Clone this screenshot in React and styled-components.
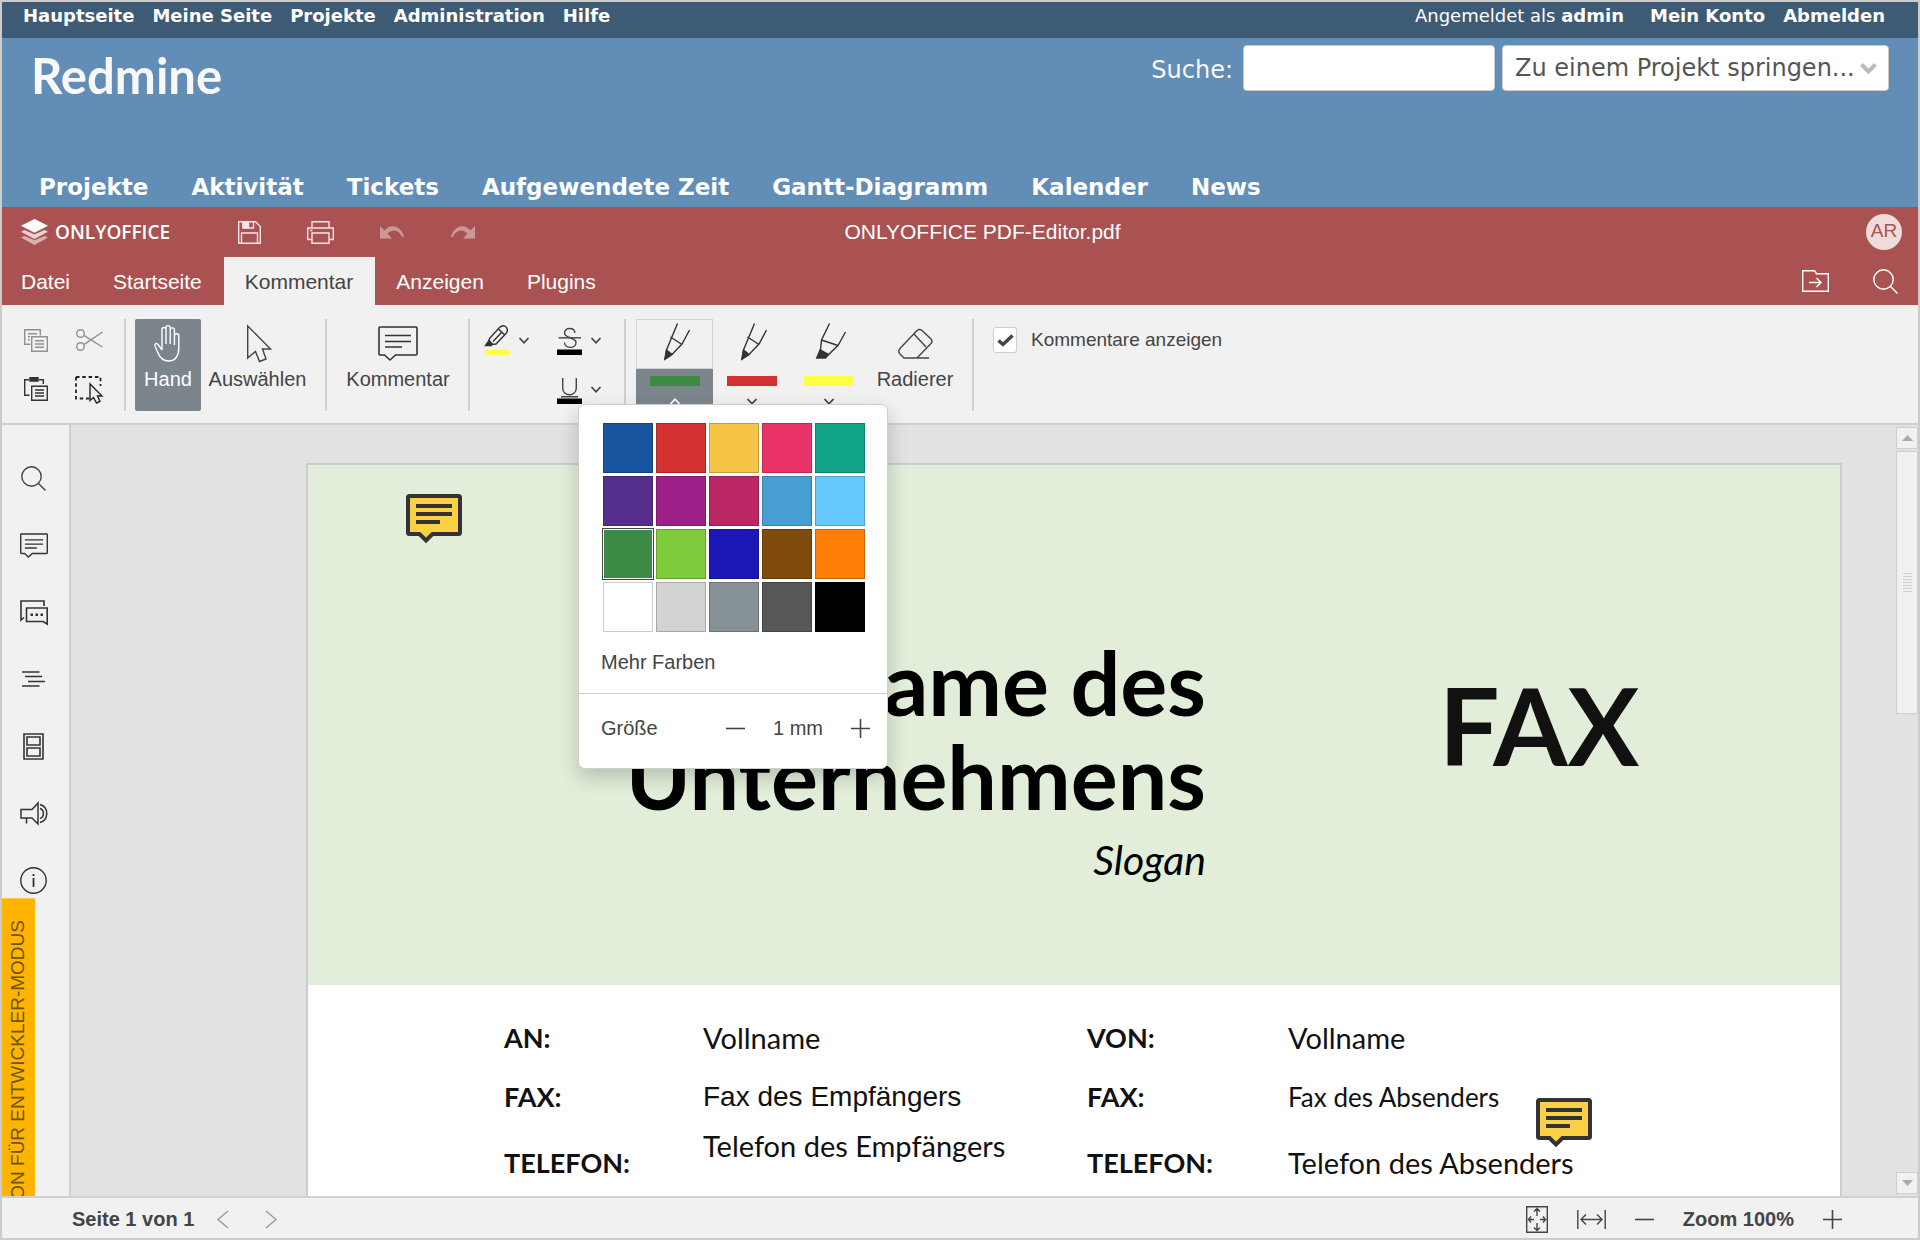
import React from "react";
import styled, { createGlobalStyle } from "styled-components";

const sans = '"Liberation Sans", Arial, sans-serif';
const verdana = '"DejaVu Sans", Verdana, sans-serif';
const lato = 'Lato, Carlito, sans-serif';

const Global = createGlobalStyle`
  *, *::before, *::after { box-sizing: border-box; }
  body { margin: 0; font-family: ${sans}; color: #444; }
  button { font: inherit; color: inherit; background: none; border: 0; padding: 0; cursor: pointer; }
  a { color: inherit; text-decoration: none; }
  svg { display: block; flex: none; overflow: visible; }
`;

const Frame = styled.div`
  height: 100vh;
  display: flex;
  flex-direction: column;
  border: 2px solid #ccc;
  overflow: hidden;
  background: #f1f1f1;
`;

/* ---------- Redmine ---------- */
const TopMenu = styled.nav`
  display: flex;
  justify-content: space-between;
  height: 36px;
  padding: 0 33px 0 21px;
  background: #3e5b76;
  color: #fff;
  font: 18px/28px ${verdana};
`;
const TopLinks = styled.div`
  display: flex;
  gap: 18px;
  a { font-weight: bold; }
`;
const LoggedAs = styled.span`
  margin-right: 8px;
`;
const RedmineHeader = styled.header`
  display: flex;
  flex-direction: column;
  justify-content: space-between;
  height: 169px;
  background: #628db6;
  color: #f8f8f8;
  font-family: ${verdana};
`;
const HeaderRow = styled.div`
  display: flex;
  justify-content: space-between;
  align-items: flex-start;
  padding: 7px 29px 0 29px;
`;
const SiteTitle = styled.h1`
  margin: 0;
  padding-top: 2px;
  font: bold 49px/56px ${lato};
`;
const QuickSearch = styled.form`
  display: flex;
  align-items: center;
  gap: 7px;
  font-size: 24px;
  label { padding: 4px 3px 0 0; }
`;
const field = `
  height: 46px;
  border: 1px solid #ccc;
  border-radius: 4px;
  background: #fff;
  color: #555;
  font: 24px/40px ${verdana};
`;
const SearchInput = styled.input`
  ${field}
  width: 252px;
  padding: 0 8px;
`;
const JumpBox = styled.div`
  display: grid;
  align-items: center;
  > * { grid-area: 1 / 1; }
  svg { justify-self: end; margin-right: 12px; pointer-events: none; }
`;
const JumpSelect = styled.select`
  ${field}
  appearance: none;
  width: 387px;
  padding: 0 30px 0 12px;
`;
const MainMenu = styled.nav`
  display: flex;
  gap: 43px;
  padding: 0 37px;
  color: #fff;
  font-weight: bold;
  font-size: 23px;
  line-height: 40px;
`;

/* ---------- Editor header ---------- */
const TitleBar = styled.div`
  display: grid;
  grid-template-columns: 1fr auto 1fr;
  align-items: center;
  height: 50px;
  padding: 0 16px 0 19px;
  background: #aa5252;
  color: #fff;
  font-size: 21px;
`;
const Brand = styled.div`
  display: flex;
  align-items: center;
`;
const BrandName = styled.span`
  width: 118px;
  margin: 0 41px 0 7px;
  font: 600 19px/24px "Open Sans", sans-serif;
`;
const QuickButton = styled.button`
  display: grid;
  place-items: center;
  width: 71px;
  height: 40px;
  opacity: ${(p) => (p.disabled ? 0.4 : 0.85)};
`;
const DocName = styled.span`
  padding-left: 42px;
`;
const Avatar = styled.span`
  justify-self: end;
  width: 36px;
  height: 36px;
  border-radius: 50%;
  background: #eedcdc;
  color: #aa5252;
  font-size: 19px;
  line-height: 34px;
  text-align: center;
`;
const Tabs = styled.nav`
  display: flex;
  height: 48px;
  background: #aa5252;
  color: #fff;
  font-size: 21px;
`;
const Tab = styled.button`
  padding: 2px 22px 0 21px;
  background: ${(p) => (p.$active ? "#f1f1f1" : "none")};
  color: ${(p) => (p.$active ? "#444" : "#fff")};
  &:first-child { padding-left: 19px; }
`;
const TabActions = styled.div`
  display: flex;
  align-items: center;
  gap: 44px;
  margin-left: auto;
  padding-right: 20px;
`;

/* ---------- Toolbar ---------- */
const Toolbar = styled.div`
  display: flex;
  align-items: flex-start;
  height: 120px;
  padding: 14px 0 0 18px;
  border-bottom: 2px solid #d0d0d0;
  background: #f1f1f1;
  font-size: 20px;
  line-height: 24px;
`;
const Divider = styled.span`
  width: 2px;
  height: 92px;
  margin: 0 ${(p) => p.$after}px 0 ${(p) => p.$before}px;
  background: #cfcfcf;
`;
const Clipboard = styled.div`
  display: grid;
  grid-template-columns: 32px 32px;
  grid-auto-rows: 32px;
  gap: 17px 21px;
  padding-top: 5px;
`;
const IconButton = styled.button`
  display: grid;
  place-items: center;
  opacity: ${(p) => (p.disabled ? 0.5 : 1)};
`;
const BigButton = styled.button`
  display: grid;
  grid-template-rows: 48px 24px;
  justify-items: center;
  align-items: center;
  align-content: start;
  width: ${(p) => p.$width}px;
  height: 92px;
  margin-right: ${(p) => p.$gap || 0}px;
  border-radius: 2px;
  background: ${(p) => (p.$active ? "#7d858c" : "none")};
  color: ${(p) => (p.$active ? "#fff" : "#444")};
  white-space: nowrap;
`;
const Markup = styled.div`
  display: grid;
  grid-template-columns: 45px 45px;
  grid-auto-rows: 30px;
  gap: 19px 27px;
  padding-top: 6px;
`;
const SplitButton = styled.button`
  display: flex;
  align-items: center;
  gap: 9px;
  grid-column: ${(p) => p.$col};
`;
const Pen = styled.div`
  position: relative;
  width: 77px;
`;
const PenTop = styled.button`
  display: grid;
  place-items: start center;
  width: 100%;
  height: 50px;
  padding: 3px 0 0 4px;
  border: 1px solid ${(p) => (p.$active ? "#d3d3d3" : "transparent")};
`;
const PenBottom = styled.button`
  display: flex;
  flex-direction: column;
  align-items: center;
  gap: 12px;
  width: 100%;
  height: 42px;
  padding-top: 7px;
  background: ${(p) => (p.$active ? "#7d858c" : "none")};
`;
const InkBar = styled.span`
  width: 50px;
  height: 10px;
  background: ${(p) => p.$color};
`;
const ShowComments = styled.label`
  display: flex;
  align-items: center;
  gap: 14px;
  height: 42px;
  font-size: 19px;
`;
const CheckWrap = styled.span`
  display: grid;
  place-items: center;
  > * { grid-area: 1 / 1; }
  svg { pointer-events: none; }
`;
const Check = styled.input`
  appearance: none;
  width: 24px;
  height: 26px;
  margin: 0;
  border: 1px solid #cfcfcf;
  border-radius: 3px;
  background: #fff;
`;

/* ---------- Colour popup ---------- */
const Popup = styled.div`
  position: absolute;
  z-index: 5;
  top: 85px;
  left: -58px;
  width: 310px;
  border: 1px solid #cfcfcf;
  border-radius: 7px;
  background: #fff;
  box-shadow: 0 8px 20px rgba(0, 0, 0, 0.2);
`;
const Swatches = styled.div`
  display: grid;
  grid-template-columns: repeat(5, 50px);
  grid-auto-rows: 50px;
  gap: 3px;
  padding: 18px 0 0 24px;
`;
const Swatch = styled.button`
  background: ${(p) => p.$color};
  border: 1px solid rgba(0, 0, 0, 0.2);
  ${(p) =>
    p.$selected &&
    `border-color: #fff; outline: 1px solid #444;`}
`;
const MoreColors = styled.button`
  display: block;
  padding: 18px 22px 19px;
`;
const SizeRow = styled.div`
  display: flex;
  align-items: center;
  height: 75px;
  padding: 0 17px 6px 22px;
  border-top: 1px solid #cfcfcf;
  output { margin: 0 28px; }
`;
const Spacer = styled.span`
  flex: 1;
`;

/* ---------- Work area ---------- */
const Work = styled.div`
  display: flex;
  flex: 1;
  min-height: 0;
`;
const Rail = styled.aside`
  position: relative;
  display: flex;
  flex-direction: column;
  align-items: center;
  gap: 19px;
  width: 69px;
  padding: 29px 16px 0 12px;
  border-right: 2px solid #cfcfcf;
  overflow: hidden;
  button { width: 40px; height: 48px; flex: none; }
`;
const DevBanner = styled.div`
  position: absolute;
  top: 473px;
  left: 0;
  width: 33px;
  padding: 0 0 22px 2px;
  background: #ffb400;
  color: #6e5216;
  font-size: 19px;
  line-height: 31px;
  writing-mode: vertical-rl;
  transform: rotate(180deg);
  white-space: nowrap;
`;
const Canvas = styled.main`
  flex: 1;
  min-width: 0;
  padding: 38px 54px 0 235px;
  background: #e2e2e2;
  overflow: hidden;
`;
const Page = styled.article`
  position: relative;
  height: 100%;
  border: 2px solid #c9cdd0;
  border-bottom: 0;
  background: #fff;
  color: #111;
  font-family: ${lato};
`;
const Pin = styled.span`
  position: absolute;
  top: ${(p) => p.$top}px;
  left: ${(p) => p.$left}px;
`;
const Cover = styled.div`
  display: flex;
  height: 520px;
  padding-top: 170px;
  background: #e2eed9;
  color: #000;
`;
const Company = styled.div`
  width: 898px;
  text-align: right;
`;
const CompanyName = styled.h2`
  margin: 0 0 0 auto;
  width: 640px;
  font-weight: bold;
  font-size: 88px;
  line-height: 94px;
`;
const Slogan = styled.p`
  margin: 13px 0 0;
  font-style: italic;
  font-size: 41px;
  line-height: 48px;
`;
const FaxTitle = styled.h2`
  margin: 26px 0 0 233px;
  font-size: 107px;
  line-height: 128px;
  color: #111;
`;
const Fields = styled.dl`
  display: grid;
  grid-template-columns: 199px 384px 201px 1fr;
  grid-template-rows: 59px 49px 51px;
  margin: 0;
  padding: 36px 0 0 196px;
  font-size: 29px;
  line-height: 34px;
  white-space: nowrap;
  dt, dd { margin: 0; }
  dt { font-weight: bold; font-size: 27px; }
`;
const Value = styled.dd`
  font-family: ${(p) => (p.$plain ? sans : lato)};
  font-size: ${(p) => p.$size || 29}px;
`;
const LowTerm = styled.dt`
  align-self: end;
`;
const LowValue = styled(Value)`
  align-self: end;
`;
const Scroll = styled.div`
  display: flex;
  flex-direction: column;
  gap: 2px;
  width: 22px;
  padding: 2px 0;
  background: #e2e2e2;
`;
const ScrollButton = styled.button`
  display: grid;
  place-items: center;
  height: 22px;
  border: 1px solid #cfcfcf;
  background: #f1f1f1;
`;
const Thumb = styled.div`
  display: grid;
  place-items: center;
  height: 263px;
  margin-bottom: auto;
  border: 1px solid #cfcfcf;
  background: #f1f1f1;
`;
const Status = styled.footer`
  display: flex;
  align-items: center;
  height: 42px;
  padding: 2px 76px 0 70px;
  border-top: 2px solid #d0d0d0;
  font-weight: bold;
  font-size: 20px;
  button { display: grid; place-items: center; }
`;
const Pager = styled.div`
  display: flex;
  gap: 36px;
  margin: 0 auto 0 23px;
`;
const ZoomTools = styled.div`
  display: flex;
  align-items: center;
  gap: 29px;
`;

/* ---------- Icons ---------- */
const Icon = ({ w, h, color = "#444", sw = 1.4, children }) => (
  <svg width={w} height={h} viewBox={`0 0 ${w} ${h}`} fill="none" stroke={color} strokeWidth={sw} aria-hidden="true">
    {children}
  </svg>
);
const Chevron = ({ up, color }) => (
  <Icon w={10} h={7} color={color} sw={1.8}>
    <path d={up ? "M.5 6 5 1.2 9.5 6" : "M.5 1 5 5.8 9.5 1"} />
  </Icon>
);
const Logo = () => (
  <svg width="27" height="26" viewBox="0 0 27 26" fill="#fff" aria-hidden="true">
    <path opacity=".55" d="M0 18.5 3.5 17l10 4.3 10-4.3 3.5 1.5L13.5 26z" />
    <path opacity=".75" d="M0 12.8 3.5 11l10 4.6 10-4.6 3.5 1.8L13.5 20z" />
    <path d="M13.5 0 27 6.8 13.5 13.8 0 6.8z" />
  </svg>
);
const Save = () => (
  <Icon w={23} h={23} color="#fff">
    <path d="M.7.7H17.5L22.3 5.5V22.3H.7zM3.5 22V12H19.5V22" />
    <path d="M5 1V7H15.5V1" />
    <path d="M5 1H10.5V6.5H5z" fill="#fff" />
  </Icon>
);
const Print = () => (
  <Icon w={27} h={23} color="#fff">
    <path d="M5 7V.7H22V7M5 18.5H.7V7H26.3V18.5H22M5 12H22V22.3H5zM3 9.5H5.5" />
  </Icon>
);
const Undo = ({ flip }) => (
  <svg width="24" height="13" viewBox="0 0 24 13" fill="#fff" aria-hidden="true">
    <path
      transform={flip ? "translate(24 0) scale(-1 1)" : undefined}
      d="M0 0V12.5H12L7.5 7.5C13 2.5 19 4 22.5 11.5L24 11C21-.5 10.5-3 4.5 4.5z"
    />
  </svg>
);
const FolderGo = () => (
  <Icon w={27} h={22} color="#fff">
    <path d="M.7 21.3V.7H12.5L14.5 3.7H26.3V21.3zM7 12.5H19M14.5 8l4.5 4.5L14.5 17" />
  </Icon>
);
const Search = ({ color }) => (
  <Icon w={25} h={25} color={color}>
    <circle cx="10.5" cy="10.5" r="9.7" />
    <path d="M17.3 17.3 24.5 24.5" />
  </Icon>
);
const Copy = () => (
  <Icon w={24} h={23} color="#333">
    <path d="M6.5 15.3H.7V.7H16.3V6.5M4 4.8H13M4 7.8H6M4 10.8H6" />
    <path d="M7.7 7.7H23.3V22.3H7.7zM11 11.8H20M11 15H20M11 18.2H20" />
  </Icon>
);
const Cut = () => (
  <Icon w={27} h={22} color="#333">
    <circle cx="4.5" cy="4.5" r="3.8" />
    <circle cx="4.5" cy="17.5" r="3.8" />
    <path d="M7.8 6.3 26.5 18M7.8 15.7 26.5 3" />
  </Icon>
);
const Paste = () => (
  <Icon w={24} h={24} color="#333">
    <path d="M5.5 18.3H.7V2.7H5M15 2.7H19.3V7" />
    <path d="M6 .7H14V4H6z" fill="#333" />
    <path d="M7.7 9.2H23.3V23.3H7.7zM11 13H20M11 16H20M11 19H20" />
  </Icon>
);
const SelectAll = () => (
  <Icon w={28} h={27} color="#222">
    <path d="M1 1H25.5V10M1 1V22.5H14" strokeDasharray="3.5 2.8" strokeWidth="1.8" />
    <path d="M15 8V24.5L18.5 21.5 21.5 27 25 25.5 22.5 20H27z" fill="#f1f1f1" />
  </Icon>
);
const Hand = () => (
  <Icon w={26} h={37} color="#fff">
    <path d="M7 25V4.500a2 2 0 0 1 4 0V19M11 5V2.700a2.100 2.100 0 0 1 4.200 0V19M15.200 5a2.100 2.100 0 0 1 4.200 0V20M19.400 11a2.200 2.200 0 0 1 4.400 0V23C23.800 31 20 36 14 36 8 36 5 33 3 28L0 21C-.700 18.500 1.500 17.500 3 19.500L7 25" />
  </Icon>
);
const Cursor = () => (
  <Icon w={24} h={37}>
    <path d="M1.700 1V33L9.500 26.500 13.500 36.500 20 34 16.500 24H24.500z" />
  </Icon>
);
const Comment = ({ small }) => (
  <svg
    width={small ? 28 : 40}
    height={small ? 25 : 35}
    viewBox="0 0 40 35"
    fill="none"
    stroke="#333"
    strokeWidth={small ? 2 : 1.6}
    aria-hidden="true"
  >
    <path d="M2 1H38Q39 1 39 2V28Q39 29 38 29H17.5L12 34 6.5 29H2Q1 29 1 28V2Q1 1 2 1zM7 9.5H33M7 15.5H33M7 21H24" />
  </svg>
);
const Highlight = () => (
  <Icon w={26} h={30} color="#333">
    <path d="M5.500 13.500 15.500 2.500Q18.500-.500 21.500 1.500 25 4.500 22 8.500L12 19 6.500 19.500M5.500 13.500 5 16M14.500 4 20.500 9.800M17.500 7.500 9 16.500" />
    <path d="M5 15.500 1.500 20.500H7.500L8 18.500z" fill="#333" />
    <path d="M1 24.500H26V30H1z" fill="#ffff45" stroke="none" />
  </Icon>
);
const Strike = () => (
  <Icon w={26} h={30}>
    <path d="M2.500 12.800H25" />
    <path d="M19 8C18.500 2 8.500 2 8.500 8 8.500 13.500 20 12 20 17.500 20 24 9 24 8.500 17.500" />
    <path d="M1 24.500H26V30H1z" fill="#000" stroke="none" />
  </Icon>
);
const Underline = () => (
  <Icon w={26} h={30}>
    <path d="M6.700 4V14C6.700 23 20.300 23 20.300 14V4M5 22.700H22" />
    <path d="M1 24.500H26V30H1z" fill="#000" stroke="none" />
  </Icon>
);
const PenIcon = ({ marker }) =>
  marker ? (
    <Icon w={30} h={37} color="#333">
      <path d="M13.5.5 5.5 17 4.5 27 12 32 22 22.5 29.5 9M5.5 17 22 22.5" />
      <path d="M4 27 .7 35H9.5L12.5 31.5z" fill="#333" />
    </Icon>
  ) : (
    <Icon w={26} h={37} color="#333">
      <path d="M13.5.5 2.5 27 1 36 8 31.5 18 21 25.5 7M6.5 14 18 21.5" />
      <path d="M2.5 27 1 36 8 31.5z" fill="#333" />
    </Icon>
  );
const Eraser = () => (
  <Icon w={35} h={31}>
    <path d="M6 30 2 26Q-.3 23.5 2 20.5L19 2.500Q21.500.300 24 2.500L33 11Q35 13.500 33 15.500L19 30M16 6 28 19M5.500 30H31" />
  </Icon>
);
const Chat = () => (
  <Icon w={28} h={25} color="#333" sw={1.6}>
    <path d="M4 17.5 1 20V1H24V6" />
    <path d="M6.5 8H27.2V24L23 21.5H6.5z" />
    <path d="M10.5 14.8h2.5M15.5 14.8h2.5M20.5 14.8h2.5" strokeWidth="2.5" />
  </Icon>
);
const Outline = () => (
  <Icon w={23} h={16} color="#333">
    <path d="M0 1H17.5M3 5.500H20M6 10.500H23M0 15H17.5" />
  </Icon>
);
const Thumbs = () => (
  <Icon w={21} h={27} color="#333" sw={1.6}>
    <path d="M1 1H20V26H1zM4 4H17V12H4zM4 15H17V23H4z" />
  </Icon>
);
const Horn = () => (
  <Icon w={27} h={23} color="#333" sw={1.5}>
    <path d="M18 1V22L12 16H1V7.5H12zM6.5 16V21.5M20 2.5C29 5 29 18 20 20.5M20 6.5C24.5 8 24.5 15 20 16.5" />
  </Icon>
);
const Info = () => (
  <Icon w={27} h={27} color="#333">
    <circle cx="13.5" cy="13.5" r="12.7" />
    <path d="M13.5 11V20M13.5 7V9" strokeWidth="1.8" />
  </Icon>
);
const Minus = () => (
  <Icon w={19} h={19} sw={1.6}>
    <path d="M0 9.5H19" />
  </Icon>
);
const Plus = () => (
  <Icon w={19} h={19} sw={1.6}>
    <path d="M0 9.5H19M9.5 0V19" />
  </Icon>
);
const FitPage = () => (
  <Icon w={22} h={27}>
    <path d="M.7.7H21.3V26.3H.7zM11 10V2.5M8 5.5l3-3 3 3M11 17V24.5M8 21.5l3 3 3-3M8 13.5H2.5M5 10.5l-2.5 3 2.5 3M14 13.5H19.5M17 10.5l2.5 3-2.5 3" />
  </Icon>
);
const FitWidth = () => (
  <Icon w={29} h={19}>
    <path d="M.8 0V19M28.2 0V19M4 9.5H25M9 4.5l-5 5 5 5M20 4.5l5 5-5 5" />
  </Icon>
);
const Note = () => (
  <svg width="56" height="50" viewBox="0 0 56 50" aria-hidden="true">
    <path
      d="M2 3.5Q2 2 3.5 2H52.5Q54 2 54 3.5V38.5Q54 40 52.5 40H26.5L20 46.5 13.5 40H3.5Q2 40 2 38.5z"
      fill="#fad146"
      stroke="#333"
      strokeWidth="4"
    />
    <path d="M10 12H46M10 20H46M10 28H34" stroke="#333" strokeWidth="4" />
  </svg>
);

const colors = [
  "#1755a0", "#d43230", "#f5c346", "#ea3368", "#12a489",
  "#552f8b", "#9d1f87", "#bb2765", "#479ed2", "#67c9fb",
  "#3d8a44", "#80cb3b", "#1c18b5", "#804c0e", "#ff7f08",
  "#ffffff", "#d3d3d3", "#879297", "#575757", "#000000",
];
const railItems = [
  ["Suche", <Search />],
  ["Kommentare", <Comment small />],
  ["Chat", <Chat />],
  ["Gliederung", <Outline />],
  ["Miniaturansichten", <Thumbs />],
  ["Feedback", <Horn />],
  ["Info", <Info />],
];

export default function App() {
  return (
    <Frame>
      <Global />
      <TopMenu>
        <TopLinks>
          {["Hauptseite", "Meine Seite", "Projekte", "Administration", "Hilfe"].map((t) => (
            <a href="#" key={t}>{t}</a>
          ))}
        </TopLinks>
        <TopLinks>
          <LoggedAs>Angemeldet als <a href="#">admin</a></LoggedAs>
          <a href="#">Mein Konto</a>
          <a href="#">Abmelden</a>
        </TopLinks>
      </TopMenu>
      <RedmineHeader>
        <HeaderRow>
          <SiteTitle>Redmine</SiteTitle>
          <QuickSearch>
            <label htmlFor="q">Suche:</label>
            <SearchInput id="q" type="text" />
            <JumpBox>
              <JumpSelect aria-label="Projekt">
                <option>Zu einem Projekt springen...</option>
              </JumpSelect>
              <Icon w={17} h={11} color="#bbb" sw={4}>
                <path d="M1.5 1.5 8.5 8.5 15.5 1.5" />
              </Icon>
            </JumpBox>
          </QuickSearch>
        </HeaderRow>
        <MainMenu>
          {["Projekte", "Aktivität", "Tickets", "Aufgewendete Zeit", "Gantt-Diagramm", "Kalender", "News"].map((t) => (
            <a href="#" key={t}>{t}</a>
          ))}
        </MainMenu>
      </RedmineHeader>

      <TitleBar>
        <Brand>
          <Logo />
          <BrandName>ONLYOFFICE</BrandName>
          <QuickButton aria-label="Speichern"><Save /></QuickButton>
          <QuickButton aria-label="Drucken"><Print /></QuickButton>
          <QuickButton aria-label="Rückgängig" disabled><Undo /></QuickButton>
          <QuickButton aria-label="Wiederholen" disabled><Undo flip /></QuickButton>
        </Brand>
        <DocName>ONLYOFFICE PDF-Editor.pdf</DocName>
        <Avatar>AR</Avatar>
      </TitleBar>
      <Tabs>
        {["Datei", "Startseite", "Kommentar", "Anzeigen", "Plugins"].map((t) => (
          <Tab key={t} $active={t === "Kommentar"}>{t}</Tab>
        ))}
        <TabActions>
          <button aria-label="Dateispeicherort öffnen"><FolderGo /></button>
          <button aria-label="Suchen"><Search color="#fff" /></button>
        </TabActions>
      </Tabs>

      <Toolbar>
        <Clipboard>
          <IconButton aria-label="Kopieren" disabled><Copy /></IconButton>
          <IconButton aria-label="Ausschneiden" disabled><Cut /></IconButton>
          <IconButton aria-label="Einfügen"><Paste /></IconButton>
          <IconButton aria-label="Alles auswählen"><SelectAll /></IconButton>
        </Clipboard>
        <Divider $before={19} $after={9} />
        <BigButton $width={66} $gap={5} $active><Hand />Hand</BigButton>
        <BigButton $width={103}><Cursor />Auswählen</BigButton>
        <Divider $before={16} $after={17} />
        <BigButton $width={108}><Comment />Kommentar</BigButton>
        <Divider $before={16} $after={14} />
        <Markup>
          <SplitButton $col={1} aria-label="Hervorheben"><Highlight /><Chevron /></SplitButton>
          <SplitButton $col={2} aria-label="Durchstreichen"><Strike /><Chevron /></SplitButton>
          <SplitButton $col={2} aria-label="Unterstreichen"><Underline /><Chevron /></SplitButton>
        </Markup>
        <Divider $before={23} $after={10} />
        <Pen>
          <PenTop $active aria-label="Stift 1"><PenIcon /></PenTop>
          <PenBottom $active aria-label="Farbe von Stift 1">
            <InkBar $color="#3d8a44" />
            <Chevron up color="#fff" />
          </PenBottom>
          <Popup>
            <Swatches>
              {colors.map((c) => (
                <Swatch key={c} $color={c} $selected={c === "#3d8a44"} aria-label={c} />
              ))}
            </Swatches>
            <MoreColors>Mehr Farben</MoreColors>
            <SizeRow>
              Größe
              <Spacer />
              <button aria-label="Kleiner"><Minus /></button>
              <output>1 mm</output>
              <button aria-label="Größer"><Plus /></button>
            </SizeRow>
          </Popup>
        </Pen>
        <Pen>
          <PenTop aria-label="Stift 2"><PenIcon /></PenTop>
          <PenBottom aria-label="Farbe von Stift 2"><InkBar $color="#d43230" /><Chevron /></PenBottom>
        </Pen>
        <Pen>
          <PenTop aria-label="Textmarker"><PenIcon marker /></PenTop>
          <PenBottom aria-label="Farbe des Textmarkers"><InkBar $color="#ffff45" /><Chevron /></PenBottom>
        </Pen>
        <BigButton $width={96}><Eraser />Radierer</BigButton>
        <Divider $before={9} $after={19} />
        <ShowComments>
          <CheckWrap>
            <Check type="checkbox" defaultChecked />
            <Icon w={17} h={13} sw={3.5}>
              <path d="M1.5 6.5 6 10.5 15.5 1.5" />
            </Icon>
          </CheckWrap>
          Kommentare anzeigen
        </ShowComments>
      </Toolbar>

      <Work>
        <Rail>
          {railItems.map(([name, icon]) => (
            <IconButton key={name} aria-label={name}>{icon}</IconButton>
          ))}
          <DevBanner>TESTVERSION FÜR ENTWICKLER-MODUS</DevBanner>
        </Rail>
        <Canvas>
          <Page>
            <Cover>
              <Company>
                <CompanyName>Name des Unternehmens</CompanyName>
                <Slogan>Slogan</Slogan>
              </Company>
              <FaxTitle>FAX</FaxTitle>
            </Cover>
            <Fields>
              <dt>AN:</dt>
              <Value>Vollname</Value>
              <dt>VON:</dt>
              <Value>Vollname</Value>
              <dt>FAX:</dt>
              <Value $plain $size={28}>Fax des Empfängers</Value>
              <dt>FAX:</dt>
              <Value $size={26}>Fax des Absenders</Value>
              <LowTerm>TELEFON:</LowTerm>
              <Value>Telefon des Empfängers</Value>
              <LowTerm>TELEFON:</LowTerm>
              <LowValue>Telefon des Absenders</LowValue>
            </Fields>
            <Pin $top={29} $left={98}><Note /></Pin>
            <Pin $top={633} $left={1228}><Note /></Pin>
          </Page>
        </Canvas>
        <Scroll>
          <ScrollButton aria-label="Nach oben">
            <svg width="11" height="6" viewBox="0 0 11 6" fill="#aaa"><path d="M0 6 5.5 0 11 6z" /></svg>
          </ScrollButton>
          <Thumb>
            <Icon w={9} h={19} color="#cfcfcf" sw={1}>
              <path d="M0 .5H9M0 3.5H9M0 6.5H9M0 9.5H9M0 12.5H9M0 15.5H9M0 18.5H9" />
            </Icon>
          </Thumb>
          <ScrollButton aria-label="Nach unten">
            <svg width="11" height="6" viewBox="0 0 11 6" fill="#aaa"><path d="M0 0 5.5 6 11 0z" /></svg>
          </ScrollButton>
        </Scroll>
      </Work>

      <Status>
        <span>Seite 1 von 1</span>
        <Pager>
          <button aria-label="Vorherige Seite">
            <Icon w={12} h={19} color="#999"><path d="M11 1 1 9.5 11 18" /></Icon>
          </button>
          <button aria-label="Nächste Seite">
            <Icon w={12} h={19} color="#999"><path d="M1 1 11 9.5 1 18" /></Icon>
          </button>
        </Pager>
        <ZoomTools>
          <button aria-label="Seite anpassen"><FitPage /></button>
          <button aria-label="Breite anpassen"><FitWidth /></button>
          <button aria-label="Verkleinern"><Minus /></button>
          <span>Zoom 100%</span>
          <button aria-label="Vergrößern"><Plus /></button>
        </ZoomTools>
      </Status>
    </Frame>
  );
}
